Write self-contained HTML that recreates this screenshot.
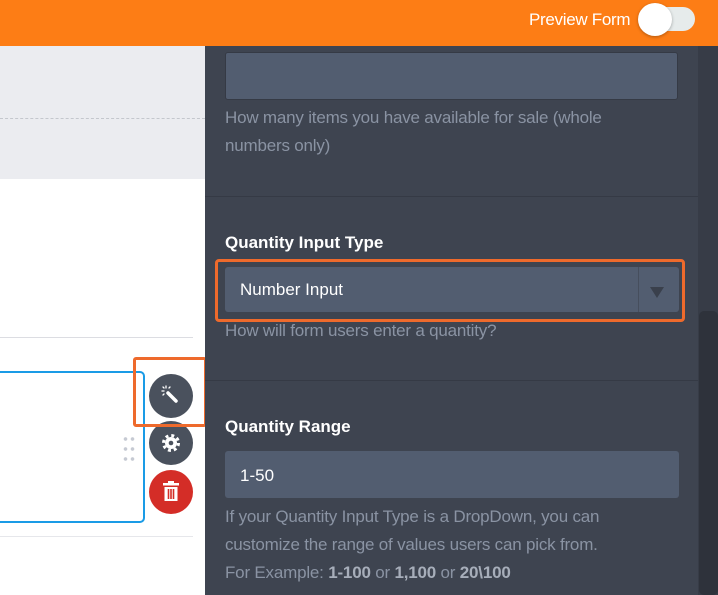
<!DOCTYPE html>
<html><head><style>
*{margin:0;padding:0;box-sizing:border-box}
body{width:718px;height:595px;overflow:hidden;position:relative;font-family:"Liberation Sans",sans-serif;background:#fff}
.a{position:absolute}
.help{color:#8a93a3;font-size:17px;line-height:28px;letter-spacing:-0.2px}
.lbl{color:#fff;font-weight:bold;font-size:17px}
.inp{background:#525d70;border-radius:3px}
</style></head><body>
<div class="a" style="left:0;top:0;width:718px;height:46px;background:#fd7d15"></div>
<div class="a" style="left:529px;top:10px;color:#fff;font-size:17px;letter-spacing:-0.3px">Preview Form</div>
<div class="a" style="left:640px;top:7px;width:55px;height:24px;border-radius:12px;background:#e6ebeb"></div>
<div class="a" style="left:638px;top:3px;width:34px;height:33px;border-radius:50%;background:#fff;box-shadow:0 1px 3px rgba(0,0,0,.3)"></div>

<div class="a" style="left:0;top:46px;width:205px;height:133px;background:#ebecf0"></div>
<div class="a" style="left:0;top:118px;width:205px;border-top:1px dashed #c4c7cd"></div>
<div class="a" style="left:0;top:337px;width:193px;border-top:1px solid #dcdde2"></div>
<div class="a" style="left:0;top:536px;width:193px;border-top:1px solid #e6e7eb"></div>
<div class="a" style="left:-10px;top:371px;width:155px;height:152px;border:2px solid #1a9be6;border-radius:5px"></div>
<div class="a" style="left:122px;top:434px;width:14px;height:28px;background:radial-gradient(circle,#c6cad3 1.6px,transparent 2px) 0 0/7px 10px"></div>
<div class="a" style="left:149px;top:374px;width:44px;height:44px;border-radius:50%;background:#4a515d"></div>
<svg class="a" style="left:149px;top:374px" width="44" height="44"><g stroke="#fff" stroke-linecap="round"><line x1="19" y1="19" x2="27" y2="27" stroke-width="3.5"/><line x1="13" y1="17" x2="15" y2="17" stroke-width="1.3"/><line x1="17" y1="12" x2="17" y2="14" stroke-width="1.3"/><line x1="14" y1="13" x2="15" y2="14" stroke-width="1.3"/><line x1="21" y1="13" x2="20" y2="14" stroke-width="1.3"/><line x1="14" y1="21" x2="15" y2="20" stroke-width="1.3"/></g></svg>
<div class="a" style="left:149px;top:421px;width:44px;height:44px;border-radius:50%;background:#4a515d"></div>
<svg class="a" style="left:149px;top:421px" width="44" height="44"><circle cx="22" cy="22" r="6" fill="#fff"/><circle cx="22" cy="22" r="7.5" fill="none" stroke="#fff" stroke-width="3" stroke-dasharray="2.95 2.95"/><circle cx="22" cy="22" r="2.3" fill="#4a515d"/></svg>
<div class="a" style="left:149px;top:470px;width:44px;height:44px;border-radius:50%;background:#d42d27"></div>
<svg class="a" style="left:149px;top:470px" width="44" height="44"><rect x="14" y="13" width="16" height="2.5" fill="#fff"/><rect x="19" y="11" width="6" height="3" fill="#fff"/><path d="M15.5 17h13v14h-13z" fill="#fff"/><g stroke="#d42d27" stroke-width="1.6"><line x1="19.5" y1="19" x2="19.5" y2="29"/><line x1="22" y1="19" x2="22" y2="29"/><line x1="24.5" y1="19" x2="24.5" y2="29"/></g></svg>
<div class="a" style="left:133px;top:357px;width:74px;height:70px;border:3px solid #ee6a2c;border-radius:3px"></div>

<div class="a" style="left:205px;top:46px;width:513px;height:549px;background:#3e4450"></div>
<div class="a" style="left:698px;top:46px;width:20px;height:549px;background:#373c47"></div>
<div class="a" style="left:699px;top:311px;width:19px;height:284px;background:#2e323b;border-radius:5px"></div>
<div class="a" style="left:205px;top:196px;width:493px;border-top:1px solid #353a45"></div>
<div class="a" style="left:205px;top:380px;width:493px;border-top:1px solid #353a45"></div>

<div class="a inp" style="left:225px;top:52px;width:453px;height:48px;border:1px solid #353a45"></div>
<div class="a help" style="left:225px;top:104px">How many items you have available for sale (whole<br>numbers only)</div>

<div class="a lbl" style="left:225px;top:233px">Quantity Input Type</div>
<div class="a inp" style="left:225px;top:267px;width:454px;height:45px"></div>
<div class="a" style="left:638px;top:267px;width:1px;height:45px;background:#464e5d"></div>
<div class="a" style="left:650px;top:287px;width:0;height:0;border-left:7px solid transparent;border-right:7px solid transparent;border-top:11px solid #3a404c"></div>
<div class="a" style="left:240px;top:280px;color:#fff;font-size:17px">Number Input</div>
<div class="a" style="left:215px;top:259px;width:470px;height:63px;border:3px solid #ee6a2c;border-radius:4px"></div>
<div class="a help" style="left:225px;top:317px">How will form users enter a quantity?</div>

<div class="a lbl" style="left:225px;top:417px">Quantity Range</div>
<div class="a inp" style="left:225px;top:451px;width:454px;height:47px"></div>
<div class="a" style="left:240px;top:466px;color:#fff;font-size:17px">1-50</div>
<div class="a help" style="left:225px;top:503px">If your Quantity Input Type is a DropDown, you can<br>customize the range of values users can pick from.<br>For Example: <b style="color:#a7aeba">1-100</b> or <b style="color:#a7aeba">1,100</b> or <b style="color:#a7aeba">20\100</b></div>
</body></html>
